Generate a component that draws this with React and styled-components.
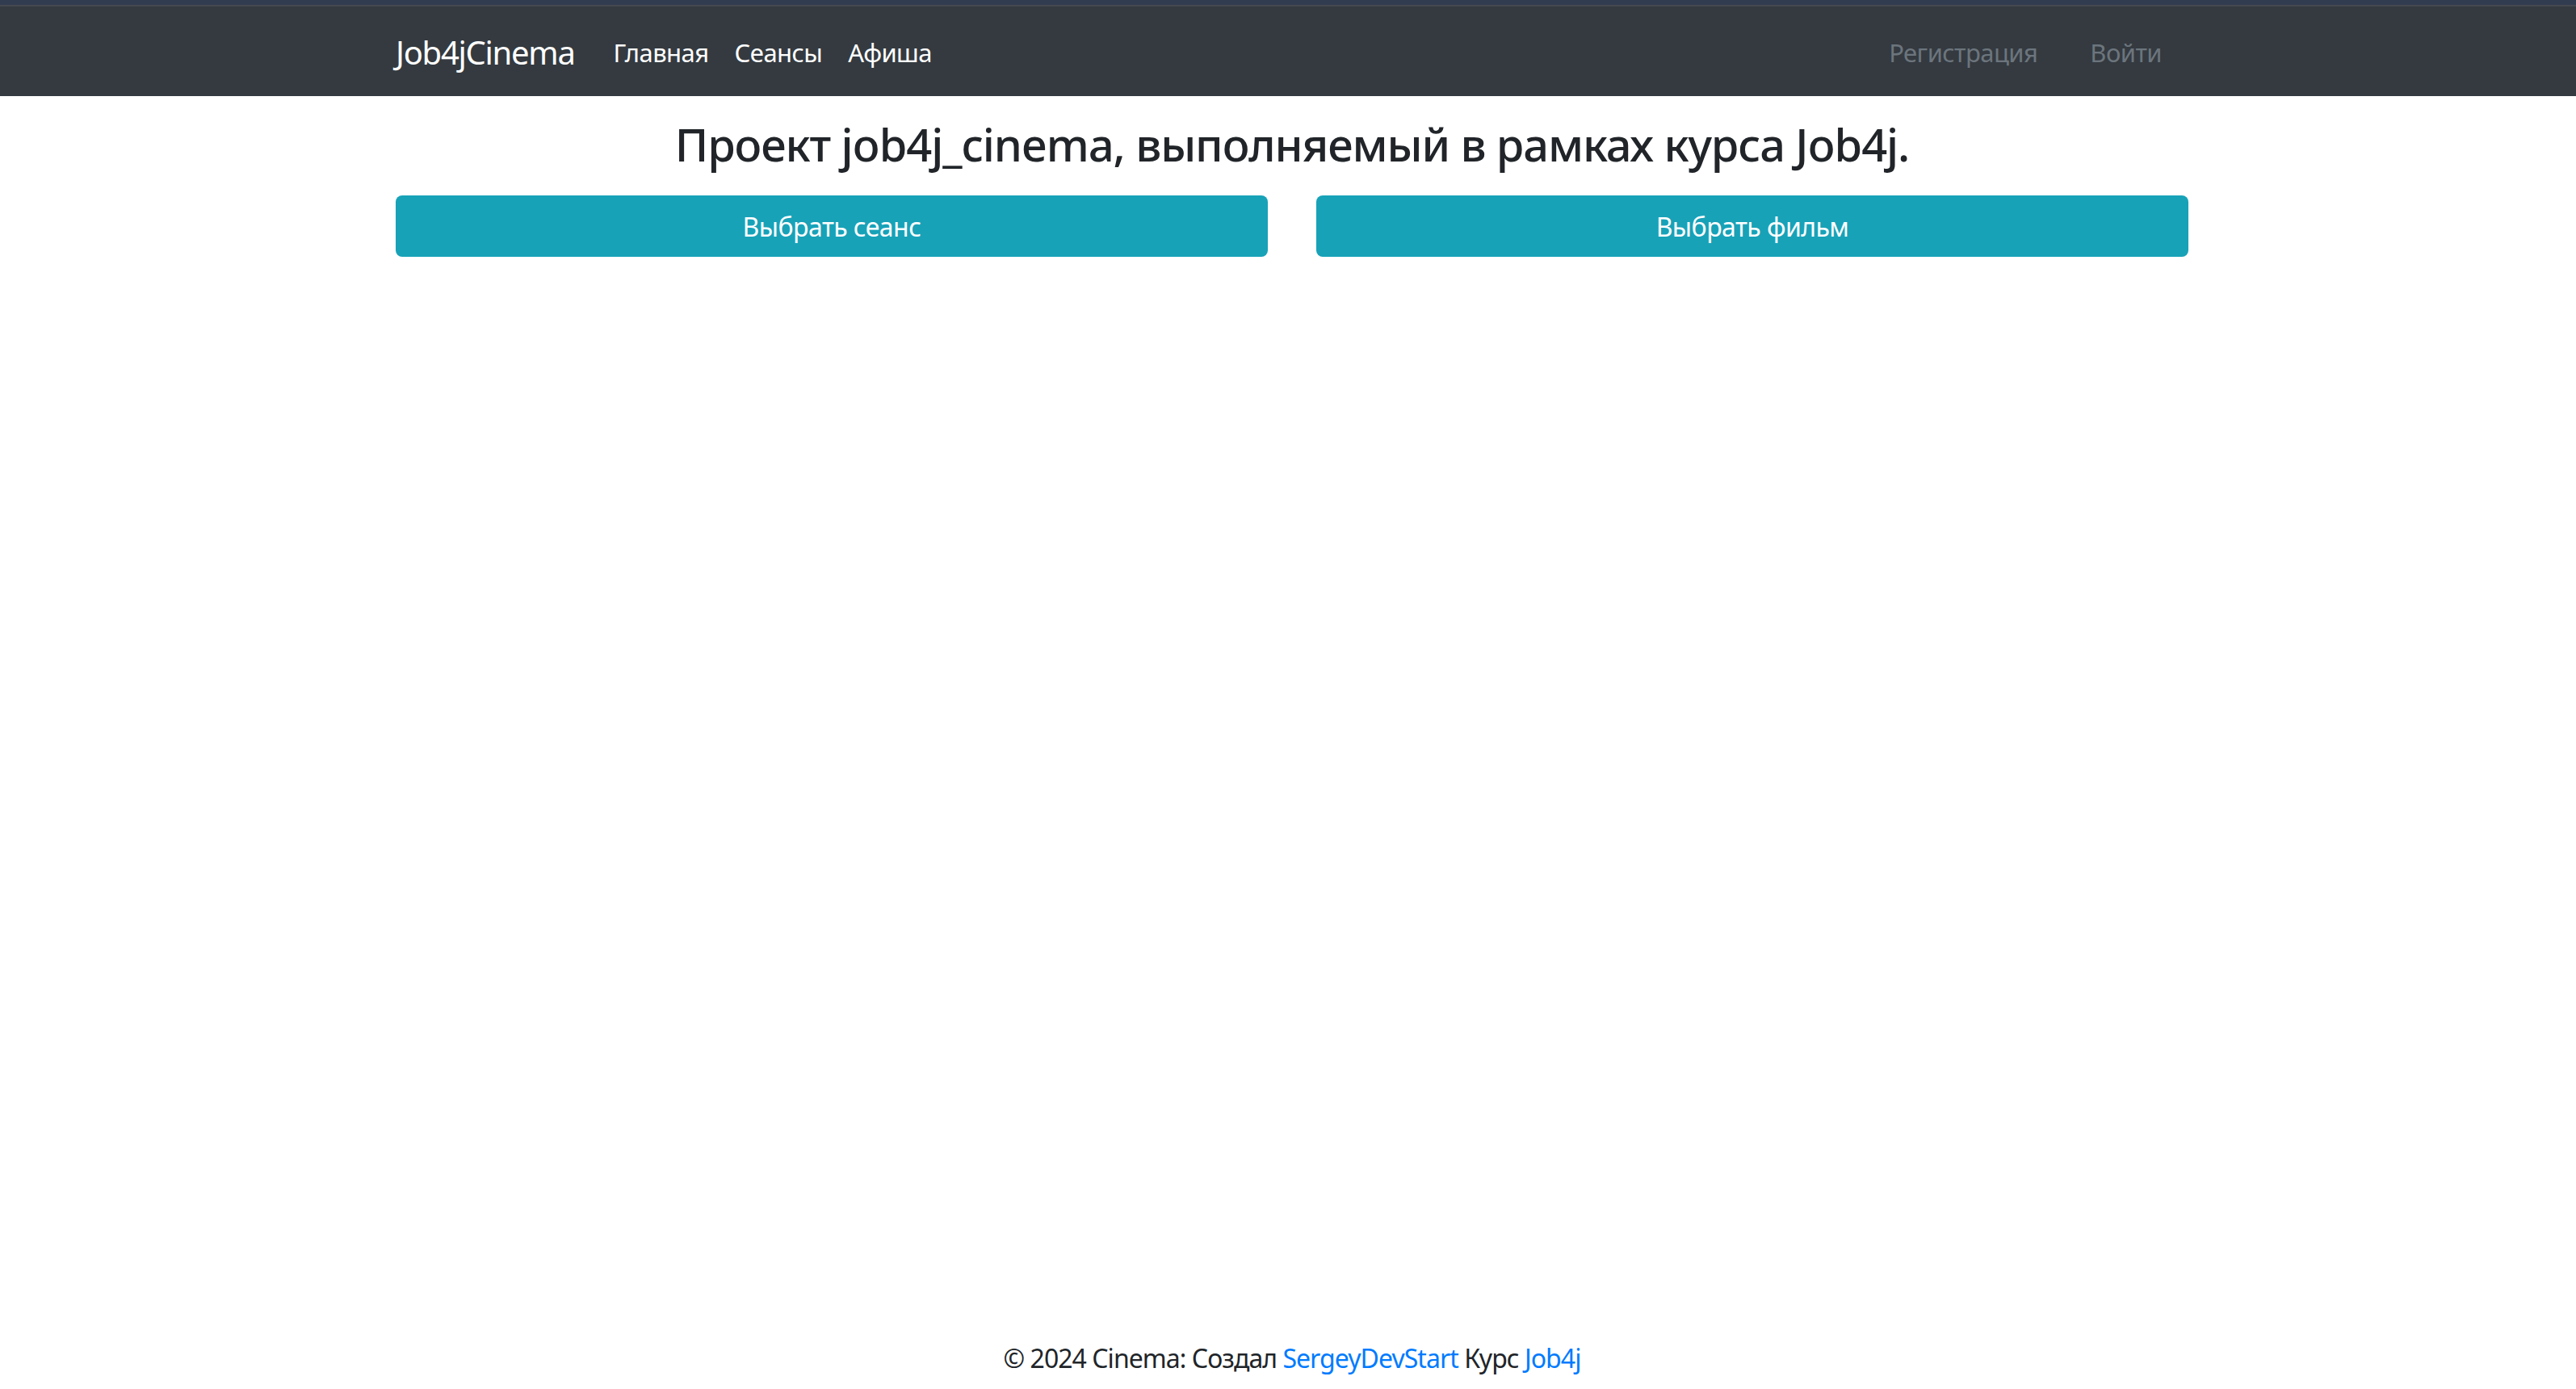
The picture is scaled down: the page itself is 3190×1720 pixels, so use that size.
import React from "react";
import styled, { createGlobalStyle } from "styled-components";

const GlobalStyle = createGlobalStyle`
  html, body {
    margin: 0;
    padding: 0;
    background: #fff;
  }
  body {
    font-family: "Noto Sans", "Open Sans", sans-serif;
    color: #212529;
    letter-spacing: -0.035em;
  }
`;

const Page = styled.div`
  min-height: 100vh;
  display: flex;
  flex-direction: column;
  padding-left: 10px;
  box-sizing: border-box;
`;

const TopStrip = styled.div`
  height: 6px;
  background: #313c50;
  border-bottom: 2px solid #45494f;
  margin-left: -10px;
`;

const Navbar = styled.nav`
  background: #343a40;
  height: 111px;
  margin-left: -10px;
  padding-left: 10px;
  display: flex;
  align-items: center;
`;

const Container = styled.div`
  width: 2220px;
  margin: 0 auto;
  display: flex;
  align-items: center;
  padding-top: 2px;
`;

const Brand = styled.a`
  font-size: 40px;
  letter-spacing: -0.032em;
  color: #fff;
  text-decoration: none;
  margin-right: 32px;
  white-space: nowrap;
`;

const NavLinks = styled.div`
  display: flex;
  margin-right: auto;
`;

const NavLink = styled.a`
  font-size: 31px;
  padding: 0 16px;
  color: ${(p) => (p.muted ? "#6c757d" : "#fff")};
  text-decoration: none;
  white-space: nowrap;
`;

const AuthLinks = styled.div`
  display: flex;
  gap: 33px;
  margin-right: 17px;
`;

const Main = styled.main`
  width: 2220px;
  margin: 0 auto;
  padding-top: 26px;
`;

const Title = styled.h3`
  margin: 0 0 30px;
  font-size: 56px;
  font-weight: 500;
  line-height: 1.2;
  letter-spacing: -0.02em;
  text-align: center;
`;

const ButtonRow = styled.div`
  display: grid;
  grid-template-columns: 1fr 1fr;
  gap: 60px;
`;

const InfoButton = styled.a`
  display: flex;
  align-items: center;
  justify-content: center;
  height: 76px;
  background: #17a2b8;
  color: #fff;
  border-radius: 8px;
  font-size: 32px;
  text-decoration: none;
`;

const Footer = styled.footer`
  margin-top: auto;
  padding-bottom: 14px;
  text-align: center;
  font-size: 32px;
  line-height: 48px;
  letter-spacing: -0.03em;
  color: #212529;
`;

const FooterLink = styled.a`
  color: #007bff;
  text-decoration: none;
`;

export default function App() {
  return (
    <>
      <GlobalStyle />
      <Page>
        <TopStrip />
        <Navbar>
          <Container>
            <Brand href="#">Job4jCinema</Brand>
            <NavLinks>
              <NavLink href="#">Главная</NavLink>
              <NavLink href="#">Сеансы</NavLink>
              <NavLink href="#">Афиша</NavLink>
            </NavLinks>
            <AuthLinks>
              <NavLink muted href="#">Регистрация</NavLink>
              <NavLink muted href="#">Войти</NavLink>
            </AuthLinks>
          </Container>
        </Navbar>
        <Main>
          <Title>Проект job4j_cinema, выполняемый в рамках курса Job4j.</Title>
          <ButtonRow>
            <InfoButton href="#">Выбрать сеанс</InfoButton>
            <InfoButton href="#">Выбрать фильм</InfoButton>
          </ButtonRow>
        </Main>
        <Footer>
          © 2024 Cinema: Создал <FooterLink href="#">SergeyDevStart</FooterLink> Курс{" "}
          <FooterLink href="#">Job4j</FooterLink>
        </Footer>
      </Page>
    </>
  );
}
